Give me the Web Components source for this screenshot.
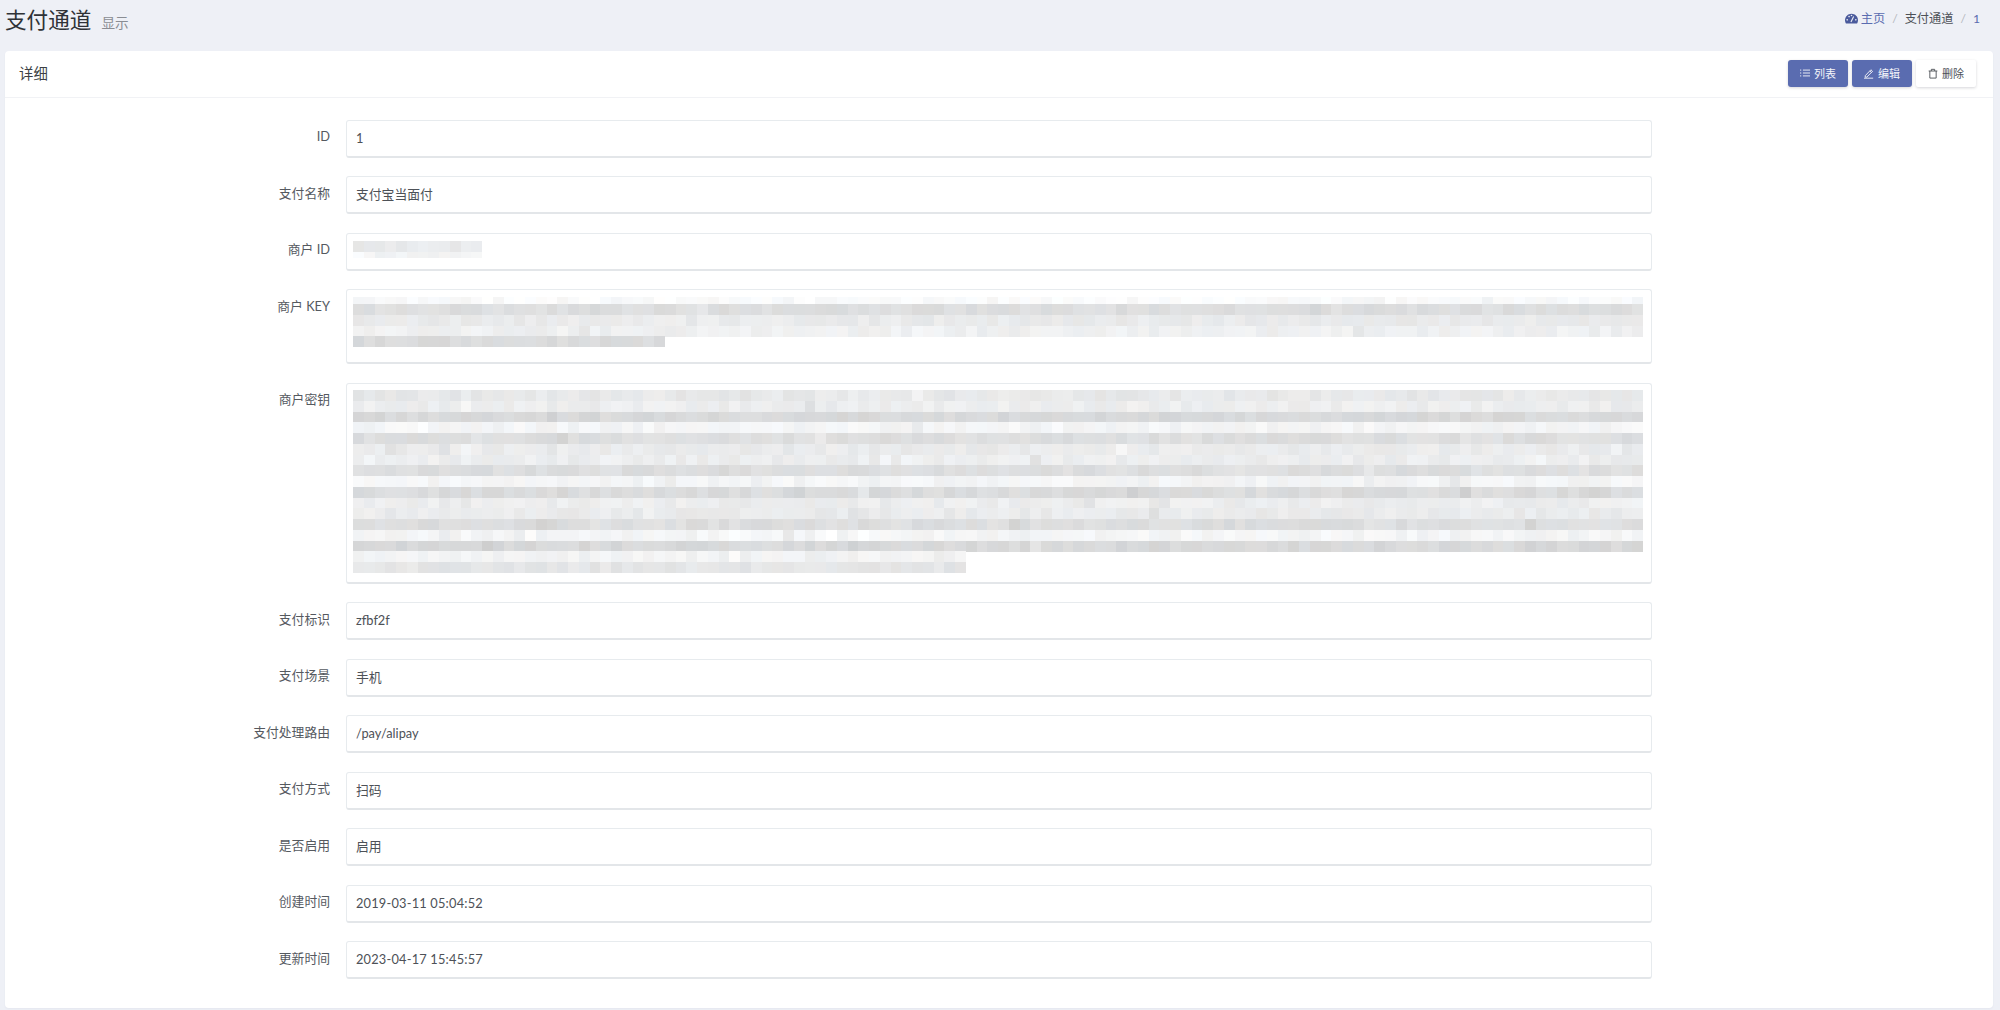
<!DOCTYPE html>
<html lang="zh">
<head>
<meta charset="utf-8">
<title>支付通道</title>
<style>
  html, body { margin: 0; height: 100%; overflow: hidden; background: #eef0f6; }
</style>
</head>
<body>

<pay-app>
  <page-head>
    <span slot="title">支付通道</span>
    <span slot="sub">显示</span>
    <span slot="home">主页</span>
    <span slot="section">支付通道</span>
    <span slot="current">1</span>
  </page-head>

  <detail-card>
    <span slot="title">详细</span>
    <tool-button slot="tools" kind="primary" icon="list">列表</tool-button>
    <tool-button slot="tools" kind="primary" icon="edit">编辑</tool-button>
    <tool-button slot="tools" icon="trash">删除</tool-button>

    <form-row><span slot="label">ID</span>1</form-row>
    <form-row><span slot="label">支付名称</span>支付宝当面付</form-row>
    <form-row>
      <span slot="label">商户 ID</span>
      <mosaic-block seed="5" top="-1" rows=".92:12:11,.95:12:6"></mosaic-block>
    </form-row>
    <form-row height="75">
      <span slot="label">商户 KEY</span>
      <mosaic-block seed="11" top="-1" rows=".98:120:7,.87:120,.92:120,.94:120,.86:29"></mosaic-block>
    </form-row>
    <form-row height="201">
      <span slot="label">商户密钥</span>
      <mosaic-block seed="23" top="-2"
        rows=".91:120,.93:120,.85:120,.96:120,.87:120,.92:120,.93:120,.87:120,.96:120,.86:120,.93:120,.92:120,.87:120,.96:120,.85:120,.95:57,.9:57"></mosaic-block>
    </form-row>
    <form-row><span slot="label">支付标识</span>zfbf2f</form-row>
    <form-row><span slot="label">支付场景</span>手机</form-row>
    <form-row><span slot="label">支付处理路由</span>/pay/alipay</form-row>
    <form-row><span slot="label">支付方式</span>扫码</form-row>
    <form-row><span slot="label">是否启用</span>启用</form-row>
    <form-row><span slot="label">创建时间</span><span style="letter-spacing: .2px">2019-03-11 05:04:52</span></form-row>
    <form-row><span slot="label">更新时间</span><span style="letter-spacing: .2px">2023-04-17 15:45:57</span></form-row>
  </detail-card>
</pay-app>

<script>
const ICONS = {
  list: `<svg viewBox="0 0 12 12" width="10" height="10" fill="none" stroke="currentColor" stroke-width="1.1">
    <path d="M3.5 2.500H12M3.500 6H12M3.500 9.500H12M0 2.500h1.500M0 6h1.500M0 9.500h1.500"/></svg>`,
  edit: `<svg viewBox="0 0 12 12" width="10" height="11" fill="none" stroke="currentColor" stroke-width="1.1">
    <path d="M1.500 8.600 8.300 1.500l1.900 1.900-6.900 7H1.500zM7 2.900l1.900 1.900M0 11.600h11"/></svg>`,
  trash: `<svg viewBox="0 0 12 12" width="10" height="11" fill="none" stroke="currentColor" stroke-width="1.1">
    <path d="M2.200 3v8.500h7.600V3M.8 3h10.400M4 3V1h4v2"/></svg>`
};

class PayApp extends HTMLElement {
  constructor() {
    super();
    this.attachShadow({mode: 'open'}).innerHTML = `
<style>
  :host {
    display: flex;
    flex-direction: column;
    height: 1010px;
    font: 12.8px Lato, "Noto Sans CJK SC", sans-serif;
    color: #4d5157;
  }
</style>
<slot></slot>`;
  }
}

class PageHead extends HTMLElement {
  constructor() {
    super();
    this.attachShadow({mode: 'open'}).innerHTML = `
<style>
  :host {
    display: flex;
    align-items: center;
    justify-content: space-between;
    height: 51px;
    padding: 0 20px 15px 5px;
    box-sizing: border-box;
  }
  .title { font-size: 21.6px; color: #2f3237; }
  .sub { font-size: 13.6px; color: #8a8d93; margin-left: 10px; }
  nav { display: flex; align-items: center; font-size: 12.2px; color: #4d5157; }
  .home, .cur { color: #5a6cb0; }
  .home { display: flex; align-items: center; gap: 3px; }
  .sep { color: #b4b7bd; margin: 0 7px; }
  svg { display: block; }
</style>
<div><span class="title"><slot name="title"></slot></span><span class="sub"><slot name="sub"></slot></span></div>
<nav>
  <span class="home">
    <svg viewBox="0 0 24 20" width="13" height="11">
      <path fill="#4a5a9c" d="M12 1C5.400 1 0 6.400 0 13c0 2.200.6 4.300 1.700 6h20.600c1.100-1.700 1.700-3.800 1.700-6 0-6.600-5.400-12-12-12z"/>
      <g fill="#eef0f6"><circle cx="4" cy="12.500" r="1.500"/><circle cx="7.500" cy="6.500" r="1.500"/><circle cx="12" cy="4.500" r="1.500"/><circle cx="20" cy="12.500" r="1.500"/></g>
      <path stroke="#eef0f6" stroke-width="2" d="M11 16.500 16 6.500"/>
    </svg>
    <slot name="home"></slot>
  </span>
  <span class="sep">/</span><slot name="section"></slot><span class="sep">/</span>
  <span class="cur"><slot name="current"></slot></span>
</nav>`;
  }
}

class DetailCard extends HTMLElement {
  constructor() {
    super();
    this.attachShadow({mode: 'open'}).innerHTML = `
<style>
  :host {
    display: block;
    margin: 0 7px 0 5px;
    height: 957px;
    box-sizing: border-box;
    background: #fff;
    border-radius: 4px;
    box-shadow: 0 1px 2px rgba(60, 70, 110, 0.05);
  }
  header {
    display: flex;
    align-items: center;
    justify-content: space-between;
    height: 47px;
    box-sizing: border-box;
    padding: 0 17px 1px 14px;
    border-bottom: 1px solid #f1f2f5;
    font-size: 14.4px;
    color: #3c3f44;
  }
  header > span:first-child { padding-bottom: 2px; }
  .tools { display: flex; gap: 4px; }
  main {
    display: flex;
    flex-direction: column;
    gap: 18.5px;
    padding-top: 21.5px;
  }
</style>
<header>
  <span><slot name="title"></slot></span>
  <span class="tools"><slot name="tools"></slot></span>
</header>
<main><slot></slot></main>`;
  }
}

class ToolButton extends HTMLElement {
  constructor() {
    super();
    const icon = ICONS[this.getAttribute('icon')] || '';
    this.attachShadow({mode: 'open'}).innerHTML = `
<style>
  :host {
    display: flex;
    align-items: center;
    justify-content: center;
    gap: 4px;
    width: 60px;
    height: 27px;
    box-sizing: border-box;
    padding-bottom: 1px;
    font-size: 11px;
    background: #fff;
    color: #4d5157;
    border-radius: 2px;
    box-shadow: 0 1px 3px rgba(50, 50, 70, 0.2);
  }
  :host([kind="primary"]) {
    background: #5a6cb0;
    color: #f4f5fa;
    border-radius: 3px;
  }
  svg { display: block; }
  .t { padding-bottom: 1px; }
</style>
${icon}<span class="t"><slot></slot></span>`;
  }
}

class FormRow extends HTMLElement {
  constructor() {
    super();
    const h = this.getAttribute('height') || 38;
    this.attachShadow({mode: 'open'}).innerHTML = `
<style>
  :host {
    display: grid;
    grid-template-columns: 325px 1306px;
    column-gap: 16px;
  }
  label {
    text-align: right;
    padding-top: 7.500px;
    color: #55595f;
    line-height: 18px;
  }
  .field {
    height: ${h}px;
    box-sizing: border-box;
    padding: 8px 9px;
    line-height: 18px;
    background: #fff;
    border: 1px solid #e7ebee;
    border-bottom: 2px solid #e3e6e9;
    border-radius: 3px;
  }
</style>
<label><slot name="label"></slot></label>
<div class="field"><slot></slot></div>`;
  }
}

// pixelated block standing in for the redacted secrets, rows are "tone:cells[:height]"
class MosaicBlock extends HTMLElement {
  constructor() {
    super();
    this.attachShadow({mode: 'open'});
  }

  connectedCallback() {
    const cell = 10.75;
    let s = +this.getAttribute('seed') || 1;
    const rnd = () => {
      s = (s * 16807) % 2147483647;
      return s / 2147483647;
    };
    let y = 0;
    let out = '';
    for (const spec of this.getAttribute('rows').split(',')) {
      const [tone, cells, height] = spec.split(':');
      const h = +height || cell;
      for (let i = 0; i < +cells; i++) {
        let t = +tone + (rnd() - 0.5) * 0.04;
        if (rnd() > 0.93) t += (rnd() - 0.5) * 0.08;
        t = Math.min(1, t);
        const tint = (rnd() - 0.5) * 4;
        const c = [t * 255 + tint - 1, t * 255, t * 255 - tint + 1].map(Math.round).join(',');
        out += `<rect x="${(i * cell).toFixed(2)}" y="${y.toFixed(2)}" width="${cell + 0.3}" height="${h + 0.3}" fill="rgb(${c})"/>`;
      }
      y += h;
    }
    this.shadowRoot.innerHTML = `
<style>
  :host { display: block; margin: ${this.getAttribute('top') || 0}px 0 0 -3px; }
  svg { display: block; overflow: visible; }
</style>
<svg width="1300" height="${y}" shape-rendering="crispEdges">${out}</svg>`;
  }
}

customElements.define('pay-app', PayApp);
customElements.define('page-head', PageHead);
customElements.define('detail-card', DetailCard);
customElements.define('tool-button', ToolButton);
customElements.define('form-row', FormRow);
customElements.define('mosaic-block', MosaicBlock);
</script>
</body>
</html>
